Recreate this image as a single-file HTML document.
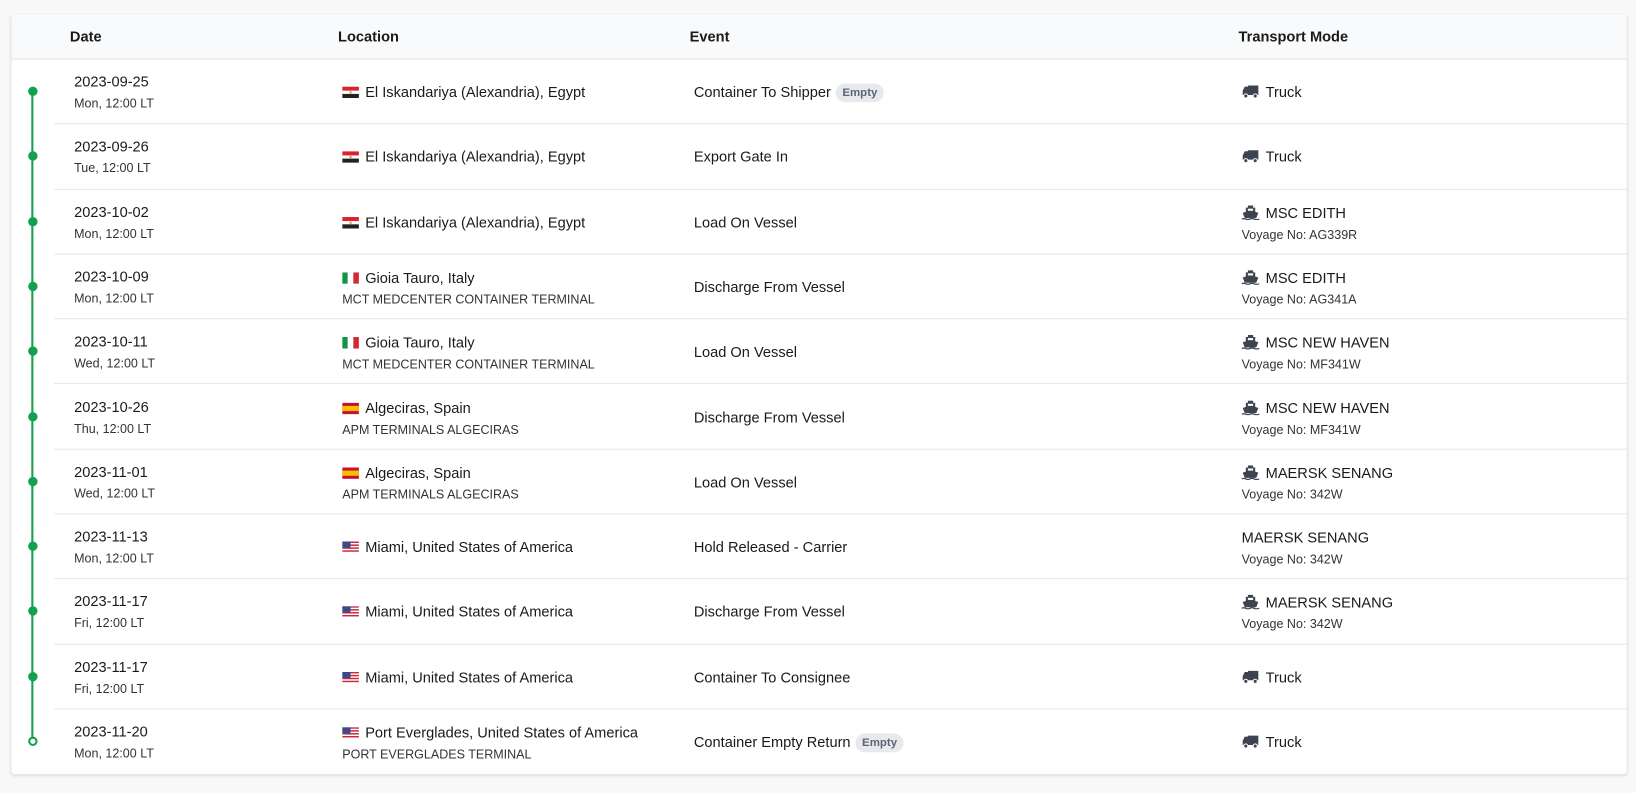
<!DOCTYPE html>
<html><head><style>
*{margin:0;padding:0;box-sizing:border-box}
body{width:1636px;height:791px;background:#f8f8f8;font-family:"Liberation Sans",sans-serif;color:#1a1a1a;position:relative;overflow:hidden}
.wrap{position:absolute;left:0;top:0;width:1568px;height:760px;transform:scale(1.0434);transform-origin:0 0}
.card{position:absolute;left:11px;top:14px;width:1548px;height:728px;background:#fff;border-radius:3px;box-shadow:0 1px 3px rgba(0,0,0,.15)}
.hd{position:absolute;left:0;top:0;width:100%;height:43px;background:#f9fafb;border-bottom:1px solid #e3e5e8;font-weight:bold;font-size:14px}
.hd span{position:absolute;top:13px}
.row{position:absolute;left:0;width:100%;height:62.3px}
.row .ln{position:absolute;left:41px;right:0;bottom:0;border-bottom:1px solid #e6e7ea}
.c{position:absolute;font-size:14px;white-space:nowrap}
.s{font-size:12px;color:#333;display:block;margin-top:6px}
.tl{position:absolute;left:19px;top:73px;width:2px;height:625px;background:#12a150}
.dot{position:absolute;left:15.5px;width:9px;height:9px;border-radius:50%;background:#12a150}
.flag{display:inline-block;width:16px;height:11px;vertical-align:-1px;margin-right:6px}
.badge{display:inline-block;background:#e8e9ec;color:#5b6675;font-size:11px;font-weight:bold;padding:3px 6px;border-radius:10px;margin-left:5px;vertical-align:1px}
.ic{display:inline-block;width:17px;height:14px;vertical-align:-2px;margin-right:6px}
</style></head><body>
<div class="wrap">
<div class="card">
<div class="hd"><span style="left:56px">Date</span><span style="left:313px">Location</span><span style="left:650px">Event</span><span style="left:1176px">Transport Mode</span></div>
<div class="tl"></div>
<div id="rows"></div>
</div>
</div>
<script>
const eg='<svg class="flag" viewBox="0 0 16 11"><rect width="16" height="4" fill="#d9232e"/><rect y="4" width="16" height="3" fill="#fff"/><rect y="7" width="16" height="4" fill="#222"/><rect x="7" y="4.5" width="2" height="2" fill="#c9a13a"/></svg>';
const it='<svg class="flag" viewBox="0 0 16 11"><rect width="5.3" height="11" fill="#109247"/><rect x="5.3" width="5.4" height="11" fill="#fff" stroke="#ddd" stroke-width=".3"/><rect x="10.7" width="5.3" height="11" fill="#d22a35"/></svg>';
const es='<svg class="flag" viewBox="0 0 16 11"><rect width="16" height="11" fill="#c8102e"/><rect y="3" width="16" height="5" fill="#fabd00"/></svg>';
const us='<svg class="flag" viewBox="0 0 16 11"><rect width="16" height="11" fill="#fff"/><g fill="#c8283a"><rect width="16" height="1.4"/><rect y="2.8" width="16" height="1.4"/><rect y="5.6" width="16" height="1.4"/><rect y="8.4" width="16" height="1.4"/></g><rect width="8" height="6" fill="#3c4a8a"/></svg>';
const truck='<svg class="ic" viewBox="0 0 17 14"><path d="M6 1h10v9H6zM1 6l2-4h3v8H1z" fill="#3d4450"/><circle cx="4" cy="11" r="2" fill="#3d4450" stroke="#fff"/><circle cx="13" cy="11" r="2" fill="#3d4450" stroke="#fff"/></svg>';
const ship='<svg class="ic" viewBox="0 0 17 14"><path d="M6 0h5v2H6zM4 2h9v4l3 1-2 5H3L1 7l3-1z" fill="#3d4450"/><path d="M0 13q2-1 4 0t4 0 4 0 5 0" stroke="#3d4450" stroke-width="1.2" fill="none"/><rect x="6" y="3" width="5" height="2" fill="#fff"/></svg>';
const R=[
['2023-09-25','Mon',eg,'El Iskandariya (Alexandria), Egypt','','Container To Shipper',1,truck,'Truck',''],
['2023-09-26','Tue',eg,'El Iskandariya (Alexandria), Egypt','','Export Gate In',0,truck,'Truck',''],
['2023-10-02','Mon',eg,'El Iskandariya (Alexandria), Egypt','','Load On Vessel',0,ship,'MSC EDITH','AG339R'],
['2023-10-09','Mon',it,'Gioia Tauro, Italy','MCT MEDCENTER CONTAINER TERMINAL','Discharge From Vessel',0,ship,'MSC EDITH','AG341A'],
['2023-10-11','Wed',it,'Gioia Tauro, Italy','MCT MEDCENTER CONTAINER TERMINAL','Load On Vessel',0,ship,'MSC NEW HAVEN','MF341W'],
['2023-10-26','Thu',es,'Algeciras, Spain','APM TERMINALS ALGECIRAS','Discharge From Vessel',0,ship,'MSC NEW HAVEN','MF341W'],
['2023-11-01','Wed',es,'Algeciras, Spain','APM TERMINALS ALGECIRAS','Load On Vessel',0,ship,'MAERSK SENANG','342W'],
['2023-11-13','Mon',us,'Miami, United States of America','','Hold Released - Carrier',0,'','MAERSK SENANG','342W'],
['2023-11-17','Fri',us,'Miami, United States of America','','Discharge From Vessel',0,ship,'MAERSK SENANG','342W'],
['2023-11-17','Fri',us,'Miami, United States of America','','Container To Consignee',0,truck,'Truck',''],
['2023-11-20','Mon',us,'Port Everglades, United States of America','PORT EVERGLADES TERMINAL','Container Empty Return',1,truck,'Truck','']];
let h='';
R.forEach((r,i)=>{const top=43+i*62.3;
const ct=y=>y?'top:14px':'top:23px';
h+=`<div class="row" style="top:${top}px">${i<10?'<div class="ln"></div>':''}
<div class="c" style="left:60px;top:13px">${r[0]}<span class="s">${r[1]}, 12:00 LT</span></div>
<div class="c" style="left:317px;${ct(r[4])}">${r[2]}${r[3]}${r[4]?'<span class="s">'+r[4]+'</span>':''}</div>
<div class="c" style="left:654px;top:23px">${r[5]}${r[6]?'<span class="badge">Empty</span>':''}</div>
<div class="c" style="left:1179px;${ct(r[9])}">${r[7]}${r[8]}${r[9]?'<span class="s">Voyage No: '+r[9]+'</span>':''}</div></div>`;
h+=`<div class="dot" style="top:${top+26}px;${i==10?'background:#fff;border:2px solid #12a150':''}"></div>`;});
document.getElementById('rows').innerHTML=h;
</script>
</body></html>
